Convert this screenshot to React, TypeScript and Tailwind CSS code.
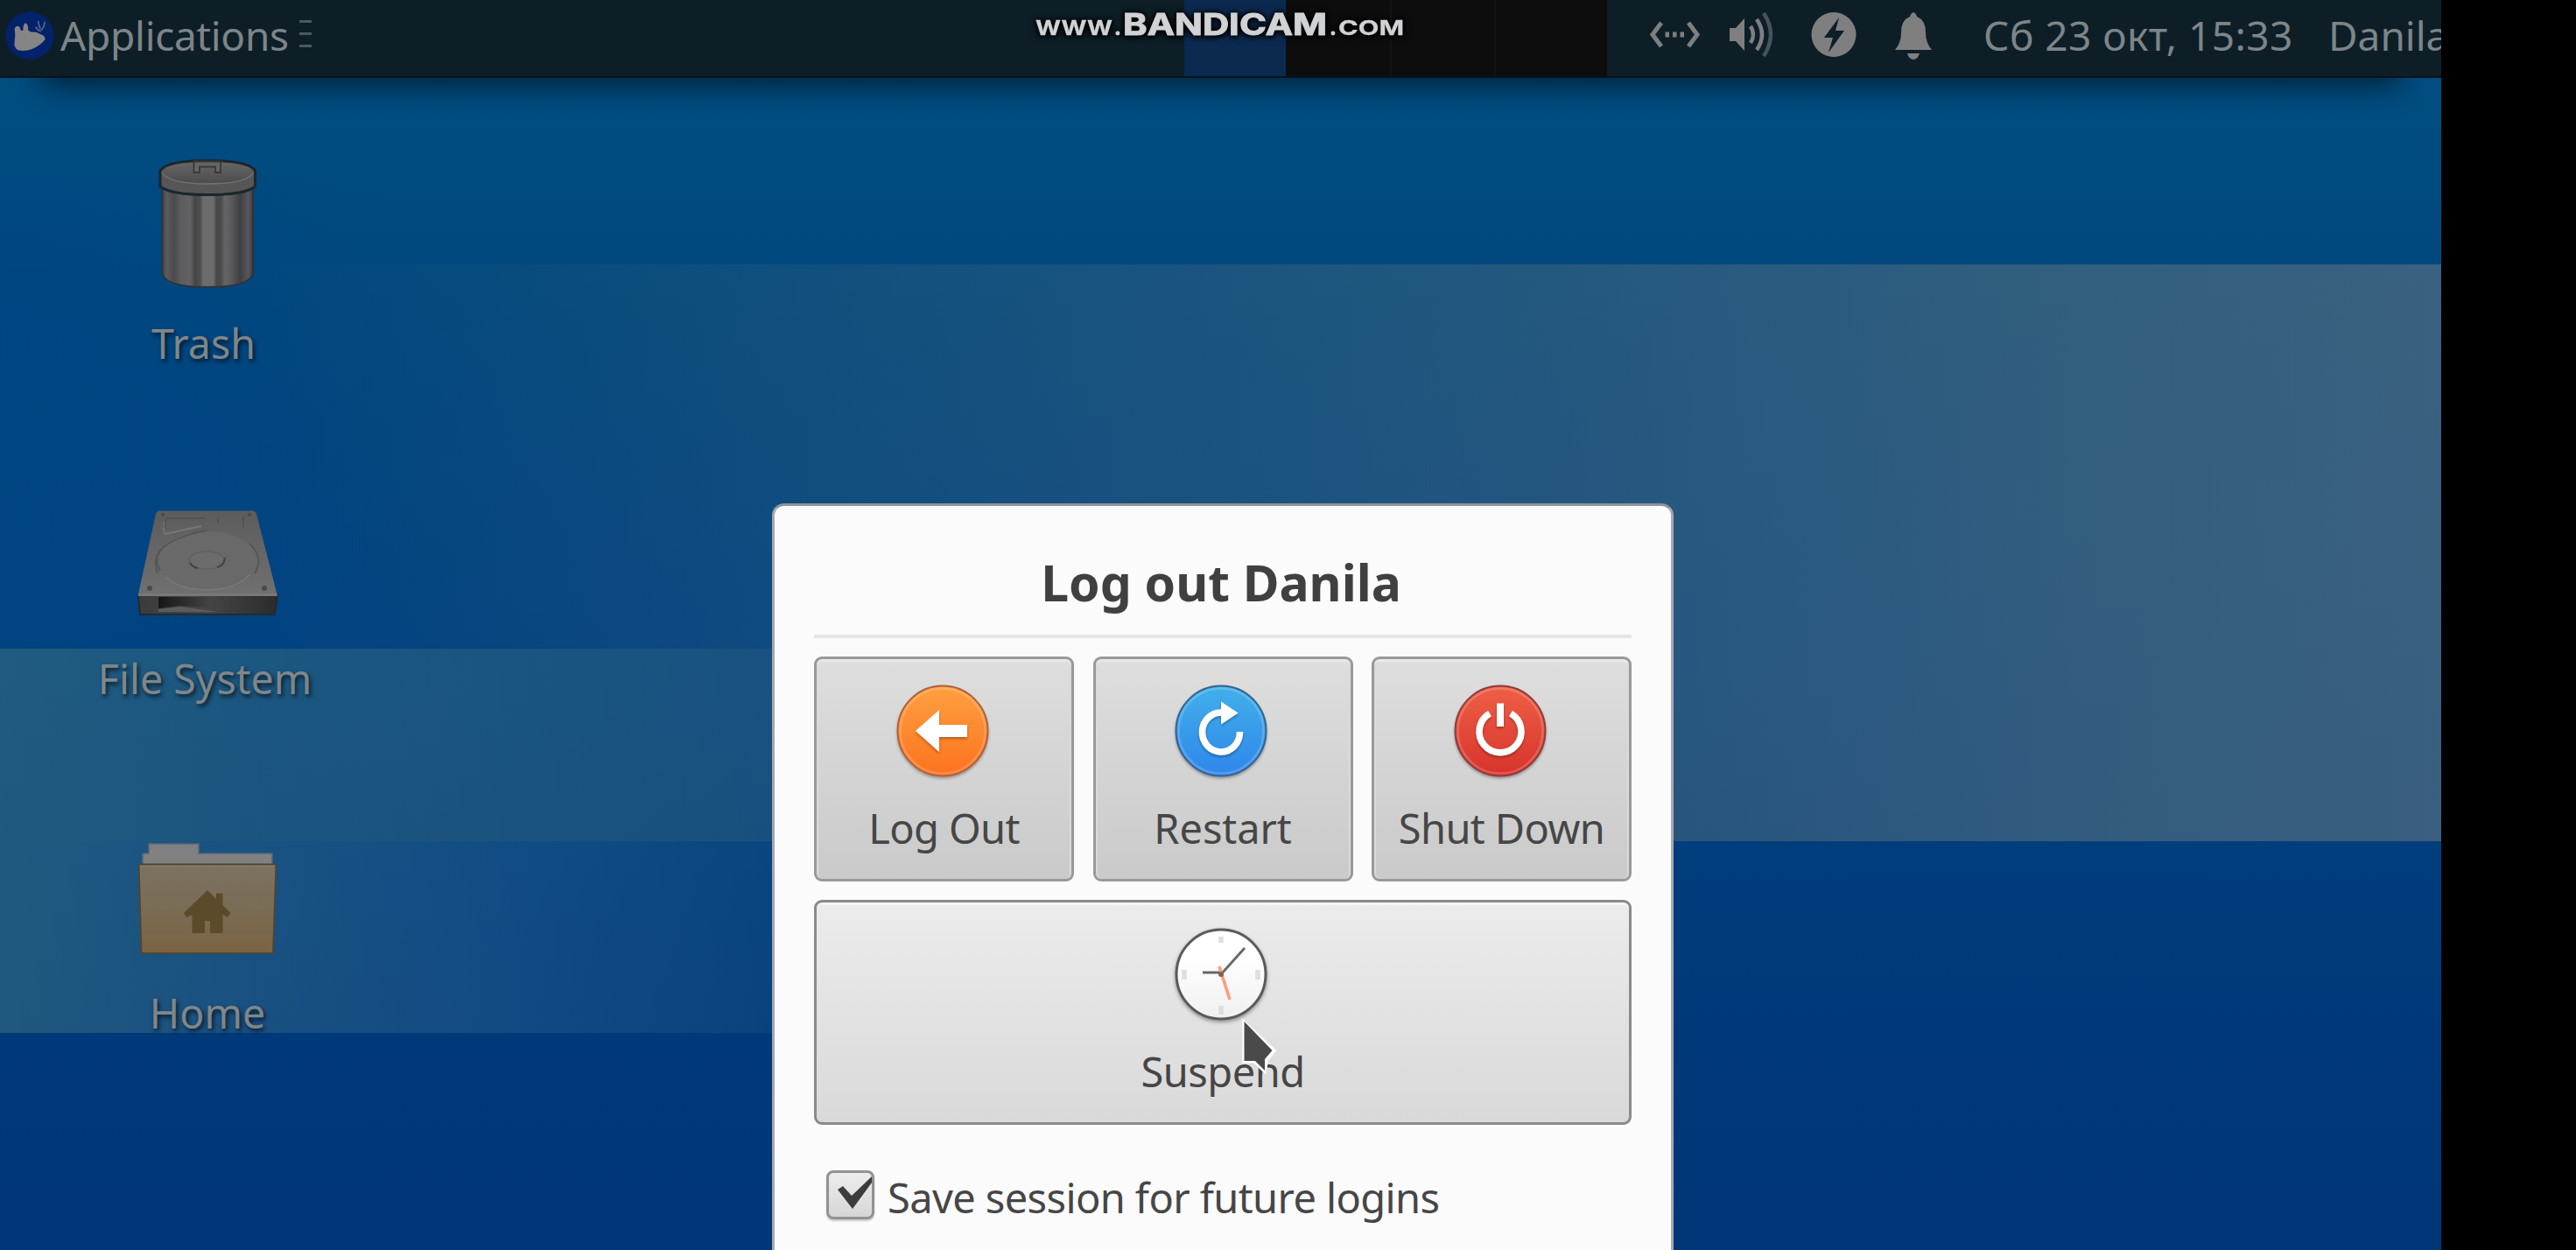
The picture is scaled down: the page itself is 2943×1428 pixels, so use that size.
import type { ReactNode } from "react";

function Wallpaper() {
  return (
    <svg className="absolute inset-0 h-full w-full" viewBox="0 0 2789 1428" preserveAspectRatio="none">
      <defs>
        <linearGradient id="base" x1="0" y1="0" x2="0" y2="1">
          <stop offset="0" stopColor="#004f80" />
          <stop offset="0.09" stopColor="#004d80" />
          <stop offset="0.25" stopColor="#00477d" />
          <stop offset="0.5" stopColor="#004280" />
          <stop offset="0.75" stopColor="#003b7a" />
          <stop offset="1" stopColor="#003577" />
        </linearGradient>
        <linearGradient id="rightBand" x1="0" y1="0" x2="1" y2="0">
          <stop offset="0.1" stopColor="#4a6a80" stopOpacity="0" />
          <stop offset="0.35" stopColor="#4a6a80" stopOpacity="0.24" />
          <stop offset="0.6" stopColor="#4a6a80" stopOpacity="0.45" />
          <stop offset="0.85" stopColor="#4a6a80" stopOpacity="0.67" />
          <stop offset="1" stopColor="#4a6880" stopOpacity="0.78" />
        </linearGradient>
        <linearGradient id="leftBand" x1="0" y1="0" x2="1" y2="0">
          <stop offset="0" stopColor="#3a6f82" stopOpacity="0.56" />
          <stop offset="0.5" stopColor="#3a6f82" stopOpacity="0.4" />
          <stop offset="1" stopColor="#3a6f82" stopOpacity="0.16" />
        </linearGradient>
        <linearGradient id="lowerBand" x1="0" y1="0" x2="1" y2="0">
          <stop offset="0" stopColor="#3a6f82" stopOpacity="0.56" />
          <stop offset="0.5" stopColor="#2f6590" stopOpacity="0.42" />
          <stop offset="1" stopColor="#2f6590" stopOpacity="0.14" />
        </linearGradient>
        <radialGradient id="leftGlow" cx="0" cy="0.5" r="1">
          <stop offset="0" stopColor="#004685" stopOpacity="0.8" />
          <stop offset="1" stopColor="#004685" stopOpacity="0" />
        </radialGradient>
      </defs>
      <rect width="2789" height="1428" fill="url(#base)" />
      <rect y="200" width="500" height="541" fill="url(#leftGlow)" />
      <rect y="302" width="2789" height="659" fill="url(#rightBand)" />
      <rect y="741" width="1000" height="220" fill="url(#leftBand)" />
      <rect y="961" width="1000" height="219" fill="url(#lowerBand)" />
    </svg>
  );
}

function MouseLogo() {
  return (
    <svg className="h-[60px] w-[60px]" viewBox="12 30 180 180">
      <circle cx="102" cy="122" r="82" fill="#04226a" />
      <path
        d="M50 98 Q56 84 67 92 L72 105 L79 104 Q79 82 87 79 Q96 80 97 104 L108 110 Q124 108 138 117 Q158 124 154 136 Q140 156 108 169 Q84 177 62 172 Q46 164 50 142 Q54 118 50 98Z"
        fill="#858585"
      />
      <path d="M122 92 Q128 104 140 108 M131 72 Q131 84 139 100 M153 74 Q154 88 142 104" fill="none" stroke="#5b6688" strokeWidth="5" />
    </svg>
  );
}

function Tray() {
  return (
    <>
      <svg className="ml-[48px] h-[60px] w-[60px]" viewBox="1884 11 60 60" fill="none" stroke="#7f7f7f">
        <path d="M1898 27 L1888 40.500 L1898 54 M1929 27 L1939 40.500 L1929 54" strokeWidth="5" />
        <path d="M1902.500 40.500h4.500 M1911 40.500h4.500 M1919.500 40.500h4.500" strokeWidth="6" />
      </svg>
      <svg className="ml-[30px] h-[60px] w-[60px]" viewBox="1974 11 60 60" fill="none">
        <path d="M1976 33h7l10-11v37l-10-11h-7z" fill="#7f7f7f" />
        <path d="M2000 31 Q2006 40.500 2000 50" stroke="#7f7f7f" strokeWidth="4.500" />
        <path d="M2007 23 Q2019 40.500 2007 58" stroke="#7f7f7f" strokeWidth="4.500" />
        <path d="M2015 16 Q2031 40.500 2015 65" stroke="#46535a" strokeWidth="4.500" />
      </svg>
      <svg className="ml-[34px] h-[60px] w-[54px]" viewBox="2068 11 54 60">
        <circle cx="2095" cy="40.500" r="25.500" fill="#7f7f7f" />
        <path d="M2101 21 L2084 44 H2094 L2089 61 L2107 36 H2097Z" fill="#0d1e27" />
      </svg>
      <svg className="ml-[40px] h-[60px] w-[48px]" viewBox="2162 11 48 60" fill="#7f7f7f">
        <path d="M2186 15 Q2189 16 2190 20 Q2200 24 2200 38 Q2200 50 2207 58 H2165 Q2172 50 2172 38 Q2172 24 2182 20 Q2183 16 2186 15Z" />
        <path d="M2179 62h14q-2 7-7 7t-7-7z" />
      </svg>
    </>
  );
}

function BandicamMark() {
  return (
    <svg
      className="absolute top-0 left-[1170px] h-[60px] w-[450px] [filter:drop-shadow(0_0_3px_#000)_drop-shadow(0_1px_3px_#000)]"
      viewBox="1170 0 450 60"
      fill="#d0d2d4"
      stroke="#d0d2d4"
      fontFamily="Inter, sans-serif"
      fontWeight="700"
    >
      <text x="1183" y="40" fontSize="23.500" strokeWidth="0.300" textLength="88" lengthAdjust="spacingAndGlyphs">WWW</text>
      <text x="1273" y="40" fontSize="23.500">.</text>
      <text x="1283" y="40" fontSize="34" strokeWidth="1" textLength="233" lengthAdjust="spacingAndGlyphs">BANDICAM</text>
      <text x="1519" y="40" fontSize="23.500">.</text>
      <text x="1529" y="40" fontSize="23.500" strokeWidth="0.300" textLength="75" lengthAdjust="spacingAndGlyphs">COM</text>
    </svg>
  );
}

function Panel() {
  return (
    <header className="relative h-[89px]">
      <div className="absolute inset-x-[50px] top-[20px] h-[68px] shadow-[0_8px_32px_2px_rgba(0,20,35,0.75)]" />
      <div className="relative flex h-[89px] items-start border-b-2 border-[#07131a] bg-[#0d1e27] text-[46px] leading-[60px] text-[#7d8588]">
        <div className="flex w-[1353px] pt-[10px] pl-[4px]">
          <MouseLogo />
          <span className="ml-[5px] w-[263px] tracking-[-0.3px]">Applications</span>
          <div className="mt-[13px] ml-[10px] flex w-[14px] flex-col gap-[11px]">
            <i className="h-[3px] bg-[#4d585e]" />
            <i className="h-[3px] bg-[#4d585e]" />
            <i className="h-[3px] bg-[#4d585e]" />
          </div>
        </div>
        <div className="flex h-[87px] w-[483px] bg-[#0d0d0d]">
          <div className="w-[116px] bg-[#0c2a50]" />
          <div className="w-[121px] border-r-2 border-[#131313]" />
          <div className="w-[119px] border-r-2 border-[#131313]" />
        </div>
        <div className="flex w-[953px] overflow-hidden pt-[10px] whitespace-nowrap [&>*]:shrink-0">
          <Tray />
          <span className="ml-[56px] w-[394px] tracking-[0.45px]">Сб 23 окт, 15:33</span>
          <span>Danila</span>
        </div>
        <BandicamMark />
      </div>
    </header>
  );
}

function TrashIcon() {
  return (
    <svg className="h-[170px] w-[180px]" viewBox="147 170 180 170">
      <defs>
        <linearGradient id="can" x1="0" x2="1" y1="0" y2="0">
          <stop offset="0" stopColor="#454547" />
          <stop offset="0.05" stopColor="#5c5c5e" />
          <stop offset="0.13" stopColor="#4b4b4e" />
          <stop offset="0.2" stopColor="#5c5c5f" />
          <stop offset="0.31" stopColor="#626264" />
          <stop offset="0.36" stopColor="#454546" />
          <stop offset="0.42" stopColor="#505050" />
          <stop offset="0.45" stopColor="#6c6c6c" />
          <stop offset="0.56" stopColor="#6c6c6c" />
          <stop offset="0.6" stopColor="#484848" />
          <stop offset="0.65" stopColor="#4c4c4c" />
          <stop offset="0.69" stopColor="#666" />
          <stop offset="0.77" stopColor="#585859" />
          <stop offset="0.86" stopColor="#404044" />
          <stop offset="0.95" stopColor="#58585a" />
          <stop offset="1" stopColor="#3d3d3f" />
        </linearGradient>
        <linearGradient id="lid" x1="0" x2="0" y1="0" y2="1">
          <stop offset="0" stopColor="#666" />
          <stop offset="1" stopColor="#4c4c4c" />
        </linearGradient>
      </defs>
      <path d="M185.500 208 V312 Q190 327 237 327 Q284 327 289 312 V208Z" fill="url(#can)" stroke="#303438" strokeWidth="2" />
      <path d="M183 194 V212 Q195 221.500 237 221.500 Q280 221.500 291.500 212 V194 Q285 182.500 237 182.500 Q190 182.500 183 194Z" fill="#565656" stroke="#1c262d" strokeWidth="3" />
      <path d="M185 195 Q192 184 237 184 Q283 184 289.500 195 Q284 208.500 237 208.500 Q192 208.500 185 195Z" fill="url(#lid)" />
      <path d="M185 196 Q192 209 237 209 Q283 209 289.500 196" fill="none" stroke="#737373" strokeWidth="1.500" />
      <path d="M221.500 196 V183.500 H252 V196 H246 V189.500 H228 V196Z" fill="#666" stroke="#383838" strokeWidth="1.800" />
    </svg>
  );
}

function DriveIcon() {
  return (
    <svg className="h-[170px] w-[180px]" viewBox="147 552 180 170" fill="none">
      <defs>
        <linearGradient id="front" x1="0" x2="1" y1="0" y2="0">
          <stop offset="0" stopColor="#3c3c3c" />
          <stop offset="0.5" stopColor="#454545" />
          <stop offset="1" stopColor="#2b2b2b" />
        </linearGradient>
        <linearGradient id="slot" x1="0" x2="1" y1="0" y2="0">
          <stop offset="0" stopColor="#161616" />
          <stop offset="1" stopColor="#444" />
        </linearGradient>
        <linearGradient id="top" x1="0" x2="0" y1="0" y2="1">
          <stop offset="0" stopColor="#5c5c5c" />
          <stop offset="1" stopColor="#707070" />
        </linearGradient>
      </defs>
      <path d="M158 678 L160 700 H314 L317 678Z" fill="url(#front)" stroke="#222b33" strokeWidth="2" />
      <path d="M182 581.500 H289 Q292 582 293 585 L317 679 H157.500 L178 585 Q179 582 182 581.500Z" fill="url(#top)" />
      <path d="M158 677.500 H316" stroke="#7d7d7d" strokeWidth="2" />
      <path d="M181 680 H240 V692 L205 690 L181 693Z" fill="url(#slot)" />
      <path d="M181 694 L206 691 L250 697 H181Z" fill="#5c5c5c" />
      <ellipse cx="236.500" cy="639" rx="58" ry="34" fill="#696969" />
      <path d="M183 650 Q170 627 204 613 Q225 605 236 604 M180 653 Q174 638 184 625 M285 619 Q302 635 291 653" stroke="#555" strokeWidth="1.800" />
      <path d="M189 657 Q205 672 237 672 Q270 672 286 654 M188 594 Q186 606 189 608 L230 599" stroke="#777" strokeWidth="1.800" />
      <path d="M188 601 L190 590 H235 M249 589 V596 M278 588 V600" stroke="#505050" strokeWidth="1.500" />
      <ellipse cx="236.500" cy="638" rx="20" ry="10" fill="#6c6c6c" stroke="#606060" strokeWidth="1.500" />
      <path d="M217 641 Q220 646 226 647 M257 635 Q256 644 248 646" stroke="#414141" strokeWidth="2" />
      <g fill="#4a4a4a">
        <circle cx="186" cy="586" r="2" />
        <circle cx="285" cy="586" r="2" />
        <circle cx="171" cy="670" r="3" />
        <circle cx="302" cy="670" r="3" />
      </g>
    </svg>
  );
}

function HomeIcon() {
  return (
    <svg className="h-[170px] w-[180px]" viewBox="147 935 180 170">
      <defs>
        <linearGradient id="folder" x1="0" x2="0" y1="0" y2="1">
          <stop offset="0" stopColor="#7c7262" />
          <stop offset="0.5" stopColor="#7a6c55" />
          <stop offset="1" stopColor="#7b6342" />
        </linearGradient>
      </defs>
      <path d="M163 988 V974 H170 V963 H227 V974 H311 V988Z" fill="#818182" stroke="#5b6670" strokeWidth="1.500" />
      <path d="M158.500 986.500 H315.500 L312 1088 H161.500Z" fill="url(#folder)" stroke="#4f4632" strokeWidth="2" />
      <path d="M160 988.500 H314" stroke="#877e6d" strokeWidth="1.500" />
      <path
        d="M237 1016 L247 1026 V1019.500 H254.500 V1033 L263.500 1042 L260 1047 L254.500 1044 V1065 H240 V1051 H234 V1065 H219.500 V1044 L213 1047 L210 1042Z"
        fill="#5c4b2a"
      />
    </svg>
  );
}

function DesktopItem({ icon, label, shift }: { icon: ReactNode; label: string; shift: string }) {
  return (
    <div className="flex h-[253px] flex-col items-center justify-between">
      {icon}
      <span className={`text-[46.5px] leading-[64px] text-[#7f868a] [text-shadow:2px_3px_5px_rgba(0,0,0,0.7)] ${shift}`}>{label}</span>
    </div>
  );
}

function RoundIcon({ id, from, to, rim, children }: { id: string; from: string; to: string; rim: string; children: ReactNode }) {
  return (
    <svg className="mr-[4px] h-[120px] w-[120px]" viewBox="-60 -60 120 120">
      <defs>
        <linearGradient id={id} x1="0" x2="0" y1="0" y2="1">
          <stop offset="0" stopColor={from} />
          <stop offset="1" stopColor={to} />
        </linearGradient>
        <filter id={`${id}-s`} x="-20%" y="-20%" width="140%" height="150%">
          <feDropShadow dx="0" dy="2" stdDeviation="1.500" floodOpacity="0.3" />
        </filter>
      </defs>
      <circle r="51.500" fill={`url(#${id})`} stroke={rim} strokeWidth="2" filter={`url(#${id}-s)`} />
      <circle r="48.500" fill="none" stroke="#fff" strokeOpacity="0.18" strokeWidth="2.500" />
      <g filter={`url(#${id}-s)`}>{children}</g>
    </svg>
  );
}

function ClockIcon() {
  return (
    <svg className="mr-[4px] h-[120px] w-[120px]" viewBox="-60 -60 120 120">
      <defs>
        <linearGradient id="face" x1="0" x2="0" y1="0" y2="1">
          <stop offset="0.3" stopColor="#fff" />
          <stop offset="1" stopColor="#f0f0f0" />
        </linearGradient>
        <filter id="face-s" x="-20%" y="-20%" width="140%" height="150%">
          <feDropShadow dx="0" dy="2" stdDeviation="2" floodOpacity="0.4" />
        </filter>
      </defs>
      <circle r="51" fill="url(#face)" stroke="#5a5a5a" strokeWidth="3" filter="url(#face-s)" />
      <g stroke="#dedede" strokeWidth="5.500">
        <path d="M0 -43v7 M0 36v10 M-42 -5v11 M42 -5v11" />
      </g>
      <path d="M-21 -2H0" stroke="#666" strokeWidth="3" />
      <path d="M0 0L27 -30" stroke="#666" strokeWidth="2.800" />
      <path d="M-2 -9L10 29" stroke="#ff9a78" strokeWidth="3.500" />
      <circle r="3" fill="#8a5f50" />
    </svg>
  );
}

const buttonBase =
  "flex h-[257px] flex-col items-center rounded-[9px] border-3 pt-[22px] text-[47px] leading-[64px] text-[#464646]";

function ActionButton({ icon, label, tracking }: { icon: ReactNode; label: string; tracking: string }) {
  return (
    <button
      className={`${buttonBase} w-[297px] border-[#999] bg-linear-to-b from-[#dedede] to-[#cacaca] shadow-[inset_0_3px_0_#e8e8e8,inset_2px_0_0_#dadada,inset_-2px_0_0_#dadada]`}
    >
      {icon}
      <span className={`mt-[19px] whitespace-nowrap ${tracking}`}>{label}</span>
    </button>
  );
}

function LogoutDialog() {
  return (
    <section className="absolute top-[575px] left-[882px] h-[900px] w-[1030px] rounded-t-[14px] border-3 border-[#a5a9ac] border-t-[#8e9498] bg-[#fbfbfb] pt-[50px] pl-[45px]">
      <h1 className="w-[930px] text-center text-[57px] leading-[74px] font-bold text-[#404040]">Log out Danila</h1>
      <div className="mt-[23px] h-[4px] w-[934px] bg-[#e6e6e6]" />
      <div className="mt-[21px] flex w-[934px] justify-between">
        <ActionButton
          label="Log Out"
          tracking="tracking-[-0.6px]"
          icon={
            <RoundIcon id="orange" from="#ffa040" to="#fd721f" rim="#b0603a">
              <path d="M-31 0 L-4 -24 V-7 H28 V7 H-4 V24Z" fill="#fff" />
            </RoundIcon>
          }
        />
        <ActionButton
          label="Restart"
          tracking="tracking-[-0.1px]"
          icon={
            <RoundIcon id="blue" from="#41b0ea" to="#2f86ea" rim="#36648c">
              <path d="M2 -21 A21.500 22.500 0 1 0 21.500 1" fill="none" stroke="#fff" strokeWidth="7.500" />
              <path d="M0 -33.500 L19.500 -20.500 L0 -7.500Z" fill="#fff" />
            </RoundIcon>
          }
        />
        <ActionButton
          label="Shut Down"
          tracking="tracking-[-0.6px]"
          icon={
            <RoundIcon id="red" from="#ee6046" to="#d7332b" rim="#8f3c3c">
              <path d="M-12 -20 A24 24 0 1 0 12 -20" fill="none" stroke="#fff" strokeWidth="7.500" />
              <path d="M0 -31.500V-5" stroke="#fff" strokeWidth="8" />
            </RoundIcon>
          }
        />
      </div>
      <button
        className={`${buttonBase} mt-[21px] w-[934px] border-[#8a8a8a] bg-linear-to-b from-[#ececec] to-[#d9d9d9] shadow-[inset_0_3px_0_#f4f4f4]`}
      >
        <ClockIcon />
        <span className="mt-[19px] tracking-[-0.5px]">Suspend</span>
      </button>
      <label className="mt-[51px] ml-[14px] flex items-start text-[47px] leading-[64px] text-[#464646]">
        <span className="mt-[1px] h-[56px] w-[55px] rounded-[8px] border-3 border-[#929292] bg-linear-to-b from-[#ededed] to-[#d6d6d6] shadow-[0_2px_2px_rgba(0,0,0,0.2)]">
          <svg className="h-[50px] w-[49px]" viewBox="947 1339 49 50">
            <path d="M957 1358 L963 1354 L973 1365 L996 1343 V1350 L974 1380Z" fill="#3c3c3c" />
          </svg>
        </span>
        <span className="ml-[15px] tracking-[-0.6px] whitespace-nowrap">Save session for future logins</span>
      </label>
    </section>
  );
}

function Cursor() {
  return (
    <svg className="absolute top-[1158px] left-[1412px] h-[76px] w-[56px]" viewBox="1412 1158 56 76">
      <path d="M1419.500 1164 V1214 L1432 1214 L1446 1227 L1448.500 1212 L1458 1200Z" fill="#fff" stroke="#f5f5f5" strokeWidth="1" />
      <path d="M1421.500 1167 V1212 H1434 L1445 1223 V1210 L1453.500 1200Z" fill="#4a4a4a" />
    </svg>
  );
}

export default function App() {
  return (
    <div className="flex h-[1428px] w-[2943px] overflow-hidden bg-black font-['Noto_Sans',sans-serif]">
      <main className="relative h-full w-[2789px] overflow-hidden">
        <Wallpaper />
        <Panel />
        <div className="relative mt-[82px] ml-[87px] flex w-[300px] flex-col gap-[129.500px]">
          <DesktopItem icon={<TrashIcon />} label="Trash" shift="mr-[9px]" />
          <DesktopItem icon={<DriveIcon />} label="File System" shift="mr-[6px]" />
          <DesktopItem icon={<HomeIcon />} label="Home" shift="mr-0" />
        </div>
        <LogoutDialog />
        <Cursor />
      </main>
    </div>
  );
}
